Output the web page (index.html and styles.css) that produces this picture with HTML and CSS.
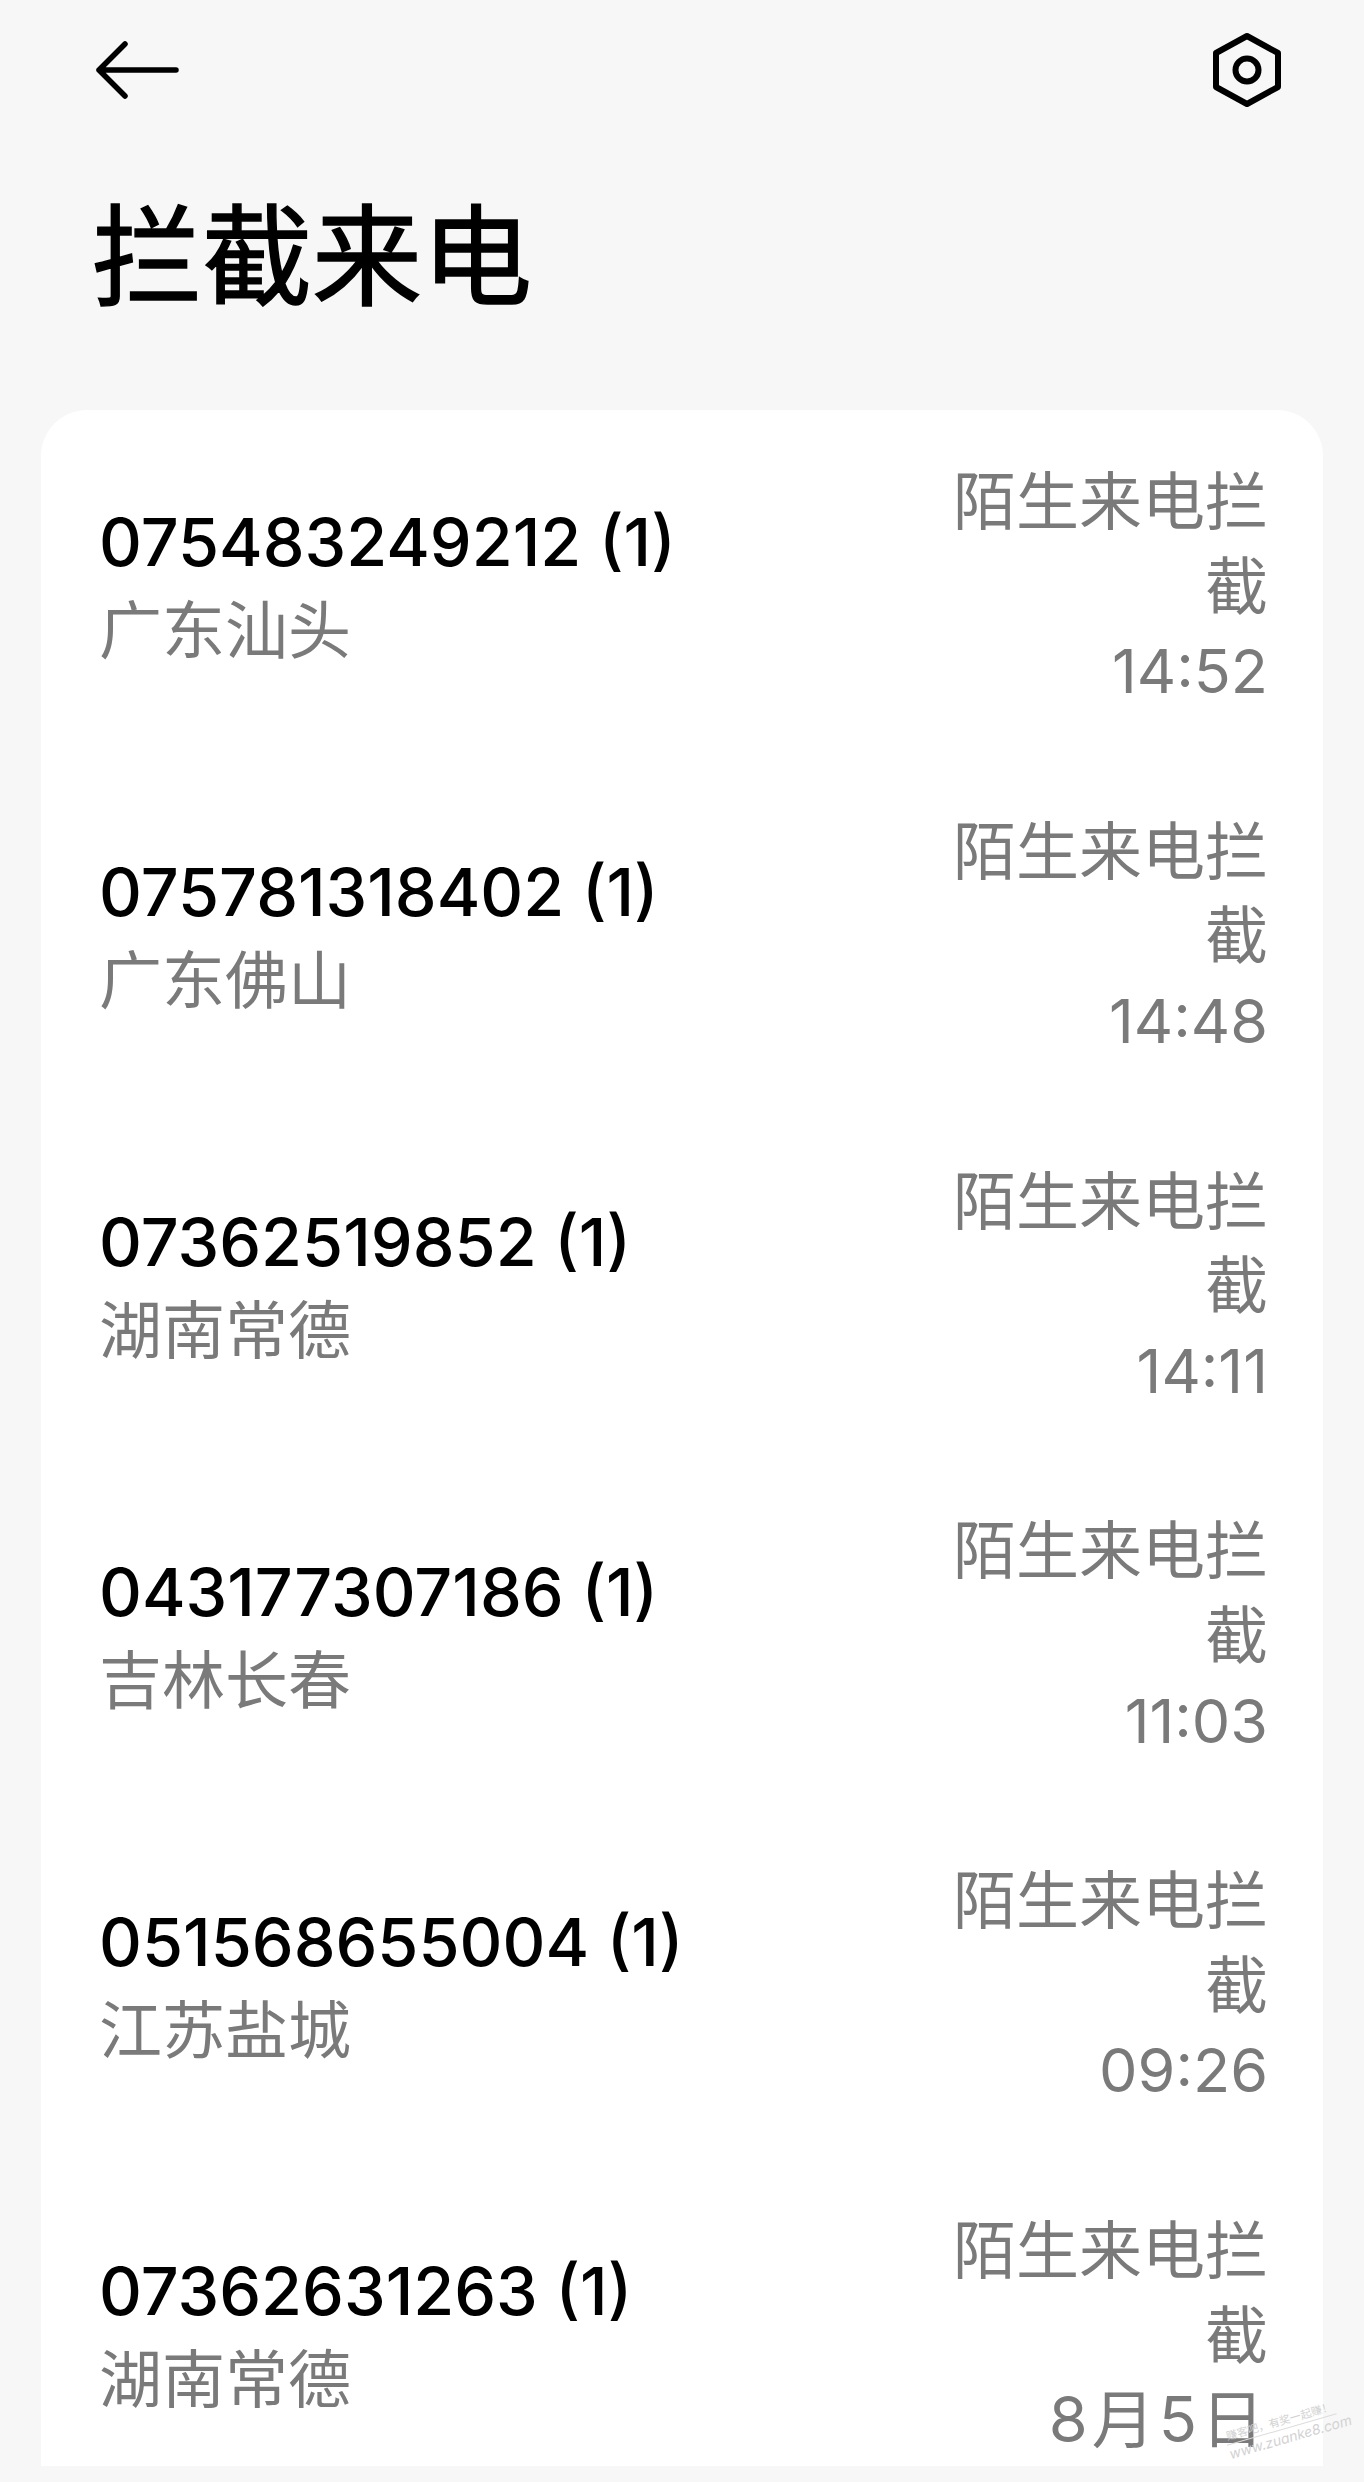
FILE: index.html
```html
<!DOCTYPE html>
<html lang="zh-CN">
<head>
    <meta charset="UTF-8">
    <meta name="viewport" content="width=device-width, initial-scale=1.0">
    <title>拦截来电</title>
    <link rel="stylesheet" href="styles.css">
</head>
<body>
    <div class="page">
        <div class="topbar">
            <svg class="icon-back" aria-hidden="true" xmlns="http://www.w3.org/2000/svg" fill="none" viewBox="0 0 84 60">
                <path stroke="currentColor" stroke-linecap="round" stroke-linejoin="round" stroke-width="5.5" d="M29 4 3 30l26 26M3 30h77"/>
            </svg>
            <svg class="icon-settings" aria-hidden="true" xmlns="http://www.w3.org/2000/svg" fill="none" viewBox="0 0 70 76">
                <path stroke="currentColor" stroke-linejoin="round" stroke-width="6" d="M35 4 66 21v34L35 72 4 55V21Z"/>
                <circle stroke="currentColor" stroke-width="6" cx="35" cy="38" r="11.5"/>
            </svg>
        </div>

        <h1 class="title">拦截来电</h1>

        <ul class="list">
            <li class="row">
                <div class="info">
                    <div class="number">075483249212 (1)</div>
                    <div class="place">广东汕头</div>
                </div>
                <div class="meta">陌生来电拦截<br><span class="time">14:52</span></div>
            </li>
            <li class="row">
                <div class="info">
                    <div class="number">075781318402 (1)</div>
                    <div class="place">广东佛山</div>
                </div>
                <div class="meta">陌生来电拦截<br><span class="time">14:48</span></div>
            </li>
            <li class="row">
                <div class="info">
                    <div class="number">07362519852 (1)</div>
                    <div class="place">湖南常德</div>
                </div>
                <div class="meta">陌生来电拦截<br><span class="time">14:11</span></div>
            </li>
            <li class="row">
                <div class="info">
                    <div class="number">043177307186 (1)</div>
                    <div class="place">吉林长春</div>
                </div>
                <div class="meta">陌生来电拦截<br><span class="time">11:03</span></div>
            </li>
            <li class="row">
                <div class="info">
                    <div class="number">051568655004 (1)</div>
                    <div class="place">江苏盐城</div>
                </div>
                <div class="meta">陌生来电拦截<br><span class="time">09:26</span></div>
            </li>
            <li class="row">
                <div class="info">
                    <div class="number">07362631263 (1)</div>
                    <div class="place">湖南常德</div>
                </div>
                <div class="meta">陌生来电拦截<br><span class="date">8月5日</span></div>
            </li>
        </ul>

        <div class="watermark">
            <div class="mark-top">赚客吧，有奖一起赚！</div>
            <div class="mark-url">www.zuanke8.com</div>
        </div>
    </div>
</body>
</html>
```

FILE: styles.css
```css
html, body {
    margin: 0;
    padding: 0;
}
body {
    background-color: #f7f7f7;
    font-family: Inter, "Noto Sans CJK SC", sans-serif;
}
.page {
    position: relative;
    height: 2482px;
    overflow: hidden;
}
.topbar {
    display: flex;
    justify-content: space-between;
    align-items: center;
    padding: 32px 82px 0 96px;
    height: 76px;
    color: #000;
}
.icon-back {
    width: 84px;
    height: 60px;
}
.icon-settings {
    width: 70px;
    height: 76px;
}
.title {
    margin: 0;
    padding: 77px 0 0 92px;
    height: 144px;
    font-size: 110px;
    line-height: 144px;
    font-weight: 400;
    -webkit-text-stroke: 1.5px #000;
    color: #000;
}
.list {
    list-style: none;
    margin: 81px 41px 0;
    padding: 49px 55px 4px 58px;
    background-color: #fff;
    border-radius: 46px 46px 0 0;
    display: flex;
    flex-direction: column;
    gap: 95px;
}
.row {
    display: flex;
    justify-content: space-between;
    align-items: center;
}
.number {
    font-size: 66.5px;
    line-height: 88px;
    font-weight: 500;
    color: #000;
}
.place {
    font-size: 63px;
    line-height: 88px;
    color: #7a7a7a;
}
.meta {
    width: 316px;
    text-align: right;
    font-size: 63px;
    line-height: 84.6px;
    color: #7a7a7a;
}
.time {
    font-size: 61px;
}
.date {
    letter-spacing: 4px;
}
.watermark {
    position: absolute;
    right: 25px;
    bottom: 35px;
    width: 114px;
    text-align: center;
    color: #d2d2d2;
    transform: rotate(-16deg);
}
.mark-top {
    font-size: 11px;
    line-height: 15px;
    border-bottom: 1px solid #dcdcdc;
    white-space: nowrap;
}
.mark-url {
    font-size: 14px;
    line-height: 17px;
    font-style: italic;
}
```
